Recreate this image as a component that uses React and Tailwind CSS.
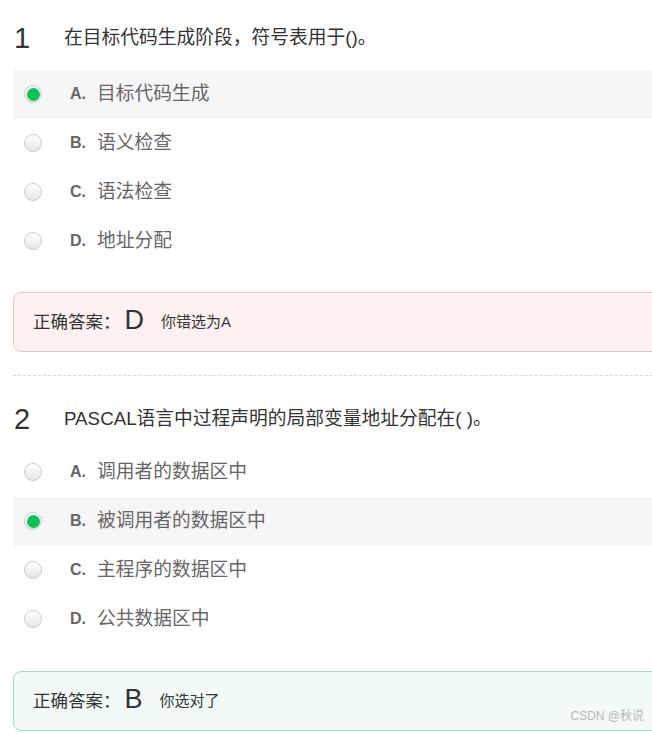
import React from 'react';

const questions = [
  {
    no: 1,
    title: '在目标代码生成阶段，符号表用于()。',
    options: [
      { key: 'A', text: '目标代码生成' },
      { key: 'B', text: '语义检查' },
      { key: 'C', text: '语法检查' },
      { key: 'D', text: '地址分配' },
    ],
    selected: 'A',
    answer: 'D',
  },
  {
    no: 2,
    title: 'PASCAL语言中过程声明的局部变量地址分配在( )。',
    options: [
      { key: 'A', text: '调用者的数据区中' },
      { key: 'B', text: '被调用者的数据区中' },
      { key: 'C', text: '主程序的数据区中' },
      { key: 'D', text: '公共数据区中' },
    ],
    selected: 'B',
    answer: 'B',
  },
];

const Radio = ({ checked }) => (
  <span className="flex items-center justify-center w-[18px] h-[18px] rounded-full border border-[#cdcdcd] bg-gradient-to-b from-[#ffffff] to-[#e6e6e6] shadow-[inset_0_1px_1px_rgba(255,255,255,0.9)]">
    {checked && <span className="w-[13px] h-[13px] rounded-full bg-[#0bc356]" />}
  </span>
);

const OptionRow = ({ option, checked }) => (
  <div className={`flex items-center h-[48.75px] pl-[11px] ${checked ? 'bg-[#f6f6f6]' : ''}`}>
    <Radio checked={checked} />
    <span className="ml-[28px] w-[27px] text-[16px] font-bold text-[#666]">{option.key}.</span>
    <span className="text-[18.75px] text-[#666]">{option.text}</span>
  </div>
);

const AnswerBox = ({ answer, selected }) => {
  const correct = answer === selected;
  return (
    <div
      className={`flex items-center h-[60px] pl-[19px] rounded-lg border ${
        correct ? 'bg-[#f1faf7] border-[#a3dcc6]' : 'bg-[#fff1f1] border-[#f2c3c5]'
      }`}
    >
      <span className="text-[17.5px] text-[#333]">正确答案：</span>
      <span className="ml-[4px] text-[27px] leading-none text-[#333] -mt-[3px]">{answer}</span>
      <span className="ml-[17px] text-[15px] text-[#333]">
        {correct ? '你选对了' : `你错选为${selected}`}
      </span>
    </div>
  );
};

const Question = ({ q, first }) => (
  <div className={first ? 'pt-[18px]' : 'pt-[23px]'}>
    <div className={`flex items-center h-10 ${first ? 'mb-3' : 'mb-[9px]'}`}>
      <span className="w-[51px] pl-px text-[29px] leading-none text-[#333]">{q.no}</span>
      <span className="text-[18.75px] text-[#333]">{q.title}</span>
    </div>
    {q.options.map((o) => (
      <OptionRow key={o.key} option={o} checked={o.key === q.selected} />
    ))}
    <div className={first ? 'mt-[27px]' : 'mt-[28px]'}>
      <AnswerBox answer={q.answer} selected={q.selected} />
    </div>
  </div>
);

export default function App() {
  return (
    <div
      className="relative w-[652px] h-[733px] overflow-hidden bg-white pl-[13px]"
      style={{ fontFamily: '"Liberation Sans", Arial, "Noto Sans CJK SC", sans-serif' }}
    >
      <div className="w-[700px]">
        <Question q={questions[0]} first />
        <div className="mt-[23px] border-t border-dashed border-[#d9d9d9]" />
        <Question q={questions[1]} />
      </div>
      {/* 水印 */}
      <span className="absolute right-[8px] bottom-[8px] text-[12px] text-[#b8b8b8]">CSDN @秋说</span>
    </div>
  );
}
